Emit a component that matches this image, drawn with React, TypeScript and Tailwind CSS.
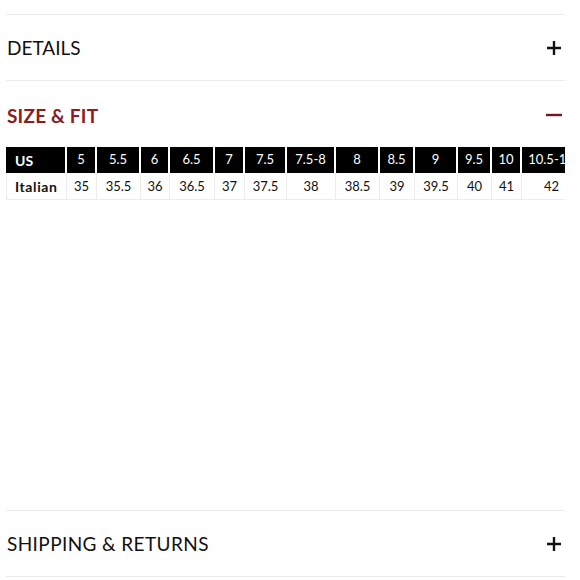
const sizes = [
  { us: "5", it: "35" },
  { us: "5.5", it: "35.5" },
  { us: "6", it: "36" },
  { us: "6.5", it: "36.5" },
  { us: "7", it: "37" },
  { us: "7.5", it: "37.5" },
  { us: "7.5-8", it: "38" },
  { us: "8", it: "38.5" },
  { us: "8.5", it: "39" },
  { us: "9", it: "39.5" },
  { us: "9.5", it: "40" },
  { us: "10", it: "41" },
  { us: "10.5-11", it: "42" },
];

const Plus = () => (
  <svg width="14" height="14" viewBox="0 0 14 14" className="shrink-0">
    <path d="M7 0v14M0 7h14" stroke="#111" strokeWidth="2.4" />
  </svg>
);

const Minus = () => (
  <svg width="16" height="4" viewBox="0 0 16 4" className="shrink-0">
    <path d="M0 2h16" stroke="#6e1a20" strokeWidth="2.4" />
  </svg>
);

/**
 * 商品详情折叠面板
 */
const App = () => {
  const cols =
    "grid grid-cols-[61px_30px_44px_29px_45px_30px_42px_49px_44px_35px_43px_34px_30px_60px]";

  return (
    <div
      className="w-[580px] h-[580px] bg-white text-[#111] pt-[14px] pl-[6px] pr-[15px]"
      style={{ fontFamily: "Lato, 'Open Sans', sans-serif" }}
    >
      <div className="border-t border-[#ececec] h-[66px] flex items-center justify-between pl-px pr-[4px]">
        <span className="text-[19px] leading-none">DETAILS</span>
        <Plus />
      </div>

      <div className="border-t border-[#ececec] h-[67px] flex items-center justify-between pl-px pr-[3px] pt-[2px]">
        <span className="text-[19px] font-bold text-[#8a1c22] leading-none tracking-[0.2px]">SIZE &amp; FIT</span>
        <Minus />
      </div>

      <div className="overflow-hidden w-[559px] text-[13px]">
        <div className={`${cols} h-[26px] text-white`}>
          <div className="bg-black mr-[2px] flex items-center pl-[9px] font-bold text-[14px]">US</div>
          {sizes.map((s) => (
            <div key={s.us} className="bg-black mr-[2px] flex items-center justify-center whitespace-nowrap">
              {s.us}
            </div>
          ))}
        </div>
        <div className={`${cols} h-[26px] mt-[1px]`}>
          <div className="border border-t-0 border-[#ececec] flex items-center pl-[8px] font-bold text-[14px] tracking-[0.6px]">
            Italian
          </div>
          {sizes.map((s) => (
            <div
              key={s.us}
              className="border-r border-b border-[#ececec] flex items-center justify-center"
            >
              {s.it}
            </div>
          ))}
        </div>
      </div>

      <div className="h-[310px]" />

      <div className="border-t border-b border-[#ececec] h-[67px] flex items-center justify-between pl-px pr-[4px]">
        <span className="text-[19px] tracking-[0.4px] leading-none">SHIPPING &amp; RETURNS</span>
        <Plus />
      </div>
    </div>
  );
};

export default App;
